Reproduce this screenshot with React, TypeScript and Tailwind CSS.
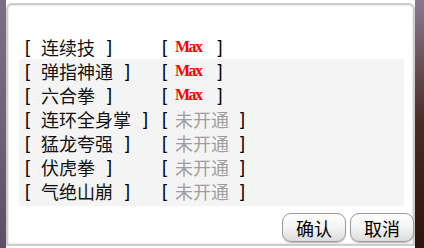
import React from "react";

const cjk = { fontFamily: '"Noto Sans CJK SC", "Liberation Sans", sans-serif' };

type Skill = { name: string; open: boolean };

const skills: Skill[] = [
  { name: "连续技", open: true },
  { name: "弹指神通", open: true },
  { name: "六合拳", open: true },
  { name: "连环全身掌", open: false },
  { name: "猛龙夸强", open: false },
  { name: "伏虎拳", open: false },
  { name: "气绝山崩", open: false },
];

function Bracket({ side }: { side: "[" | "]" }) {
  return <span className="font-['Liberation_Sans'] text-[18px] leading-none text-black">{side}</span>;
}

function Row({ skill }: { skill: Skill }) {
  return (
    <div className="flex h-[24px] items-center pl-[6px]">
      <div className="flex w-[137px] items-center">
        <span className="w-[16px]"><Bracket side="[" /></span>
        <span className="text-[18px] leading-none text-[#111]" style={cjk}>{skill.name}</span>
        <span className="w-[12px]" />
        <Bracket side="]" />
      </div>
      <div className="flex items-center">
        <span className="w-[13px]"><Bracket side="[" /></span>
        {skill.open ? (
          <span className="font-['Liberation_Serif'] text-[16px] font-bold leading-none tracking-[-1.5px] text-[#ff0000]">Max</span>
        ) : (
          <span className="text-[18px] leading-none text-[#9e9e9e]" style={cjk}>未开通</span>
        )}
        <span className={skill.open ? "w-[16px]" : "w-[11px]"} />
        <Bracket side="]" />
      </div>
    </div>
  );
}

function Button({ label }: { label: string }) {
  return (
    <button className="flex h-[29px] w-[64px] items-center justify-center rounded-[9px] border border-[#9c9c9c] bg-gradient-to-b from-white via-[#f4f4f4] to-[#dcdcdc] text-[18px] leading-none text-black shadow-[inset_0_1px_0_#fff,0_1px_1px_rgba(0,0,0,0.25)]" style={cjk}>
      {label}
    </button>
  );
}

export default function App() {
  return (
    <div className="flex h-[248px] w-[424px] bg-white">
      <div className="w-[6px] bg-gradient-to-b from-[#7c6f85] via-[#6f6177] to-[#5d4f62]" />
      <div className="flex flex-1 flex-col pt-[3px] pb-[2px]">
        <div className="flex flex-1 flex-col rounded-t-[6px] border-2 border-[#cdcdcd] bg-white pl-[11px] pr-[9px] pt-[30px] shadow-[inset_0_0_0_1px_#ececec]">
          <Row skill={skills[0]} />
          <div className="bg-[#f4f4f4] pb-[3px]">
            {skills.slice(1).map((s) => (
              <Row key={s.name} skill={s} />
            ))}
          </div>
          <div className="-mr-[10px] mt-[7px] flex justify-end gap-[4px]">
            <Button label="确认" />
            <Button label="取消" />
          </div>
        </div>
      </div>
      <div className="w-[9px] bg-gradient-to-b from-[#8a7b92] via-[#4a2a24] to-[#2e140e]" />
    </div>
  );
}
